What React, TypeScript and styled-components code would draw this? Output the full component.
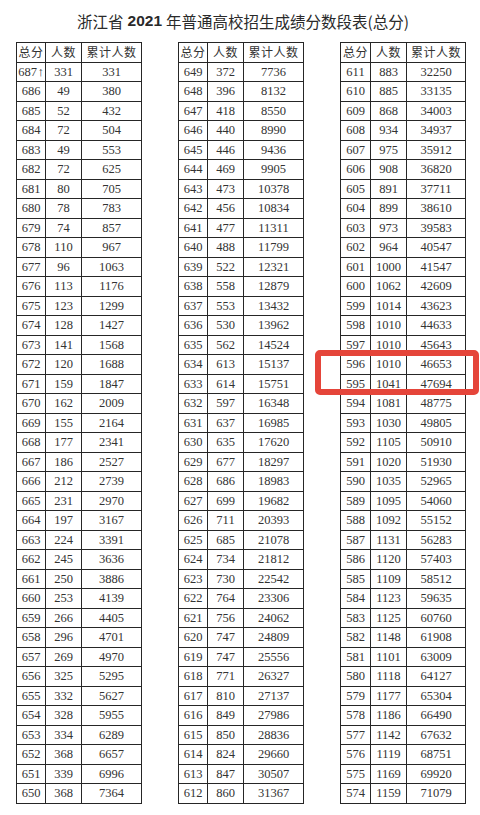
import React from "react";
import styled, { createGlobalStyle } from "styled-components";

const GlobalStyle = createGlobalStyle`
  html, body {
    margin: 0;
    padding: 0;
    background: #ffffff;
  }
  body {
    font-family: "Liberation Serif", "Noto Sans CJK SC", serif;
  }
`;

// 每一列：起始分 + 每分人数，累计人数在渲染时算出
const columns: { start: number; counts: number[] }[] = [
  {
    start: 687,
    counts: [
      331, 49, 52, 72, 49, 72, 80, 78, 74, 110, 96, 113, 123, 128, 141, 120,
      159, 162, 155, 177, 186, 212, 231, 197, 224, 245, 250, 253, 266, 296,
      269, 325, 332, 328, 334, 368, 339, 368,
    ],
  },
  {
    start: 649,
    counts: [
      372, 396, 418, 440, 446, 469, 473, 456, 477, 488, 522, 558, 553, 530,
      562, 613, 614, 597, 637, 635, 677, 686, 699, 711, 685, 734, 730, 764,
      756, 747, 747, 771, 810, 849, 850, 824, 847, 860,
    ],
  },
  {
    start: 611,
    counts: [
      883, 885, 868, 934, 975, 908, 891, 899, 973, 964, 1000, 1062, 1014,
      1010, 1010, 1010, 1041, 1081, 1030, 1105, 1020, 1035, 1095, 1092, 1131,
      1120, 1109, 1123, 1125, 1148, 1101, 1118, 1177, 1186, 1142, 1119, 1169,
      1159,
    ],
  },
];

const Page = styled.div`
  width: 480px;
  height: 815px;
  background: #fff;
  overflow: hidden;
`;

const Title = styled.h1`
  margin: 0;
  height: 42px;
  display: flex;
  align-items: center;
  justify-content: center;
  padding-left: 6px;
  font-family: "Noto Sans CJK SC", "Liberation Sans", sans-serif;
  font-weight: 400;
  font-size: 15.5px;
  color: #2a2a2a;

  b {
    font-family: "Liberation Sans", sans-serif;
    font-weight: 700;
    margin: 0 4px;
  }
`;

const Tables = styled.div`
  display: flex;
  padding-left: 16px;
  gap: 36px;
`;

const Holder = styled.div`
  position: relative;
`;

const Grid = styled.table`
  border-collapse: collapse;
  table-layout: fixed;
  width: 125px;
  border: 1.5px solid #222;
`;

const Col = styled.col<{ $w: number }>`
  width: ${(p) => p.$w}px;
`;

const Cell = styled.td<{ $head?: boolean }>`
  height: 18.5px;
  padding: 0;
  border: 1px solid #262626;
  text-align: center;
  vertical-align: middle;
  color: #333;
  white-space: nowrap;
  overflow: visible;
  font-family: ${(p) =>
    p.$head
      ? `"Noto Sans CJK SC", sans-serif`
      : `"Liberation Serif", "Noto Sans CJK SC", serif`};
  font-size: ${(p) => (p.$head ? "12px" : "12.5px")};
  letter-spacing: ${(p) => (p.$head ? "0.5px" : "0")};
  line-height: 1;
`;

const Arrow = styled.span`
  font-family: "Liberation Serif", "DejaVu Serif", serif;
  font-size: 13px;
  margin-left: 0.5px;
`;

const Mark = styled.div`
  position: absolute;
  left: -25px;
  top: 308px;
  width: 164px;
  height: 45px;
  box-sizing: border-box;
  border: 6px solid #e5453a;
  border-radius: 5px;
  pointer-events: none;
`;

function ScoreTable({
  start,
  counts,
  base,
  widths,
  marked,
}: {
  start: number;
  counts: number[];
  base: number;
  widths: number[];
  marked?: boolean;
}) {
  let total = base;
  return (
    <Holder>
      <Grid>
        <colgroup>
          {widths.map((w, i) => (
            <Col key={i} $w={w} />
          ))}
        </colgroup>
        <tbody>
          <tr>
            <Cell $head>总分</Cell>
            <Cell $head>人数</Cell>
            <Cell $head>累计人数</Cell>
          </tr>
          {counts.map((n, i) => {
            total += n;
            const score = start - i;
            return (
              <tr key={score}>
                <Cell>
                  {score}
                  {score === 687 && <Arrow>↑</Arrow>}
                </Cell>
                <Cell>{n}</Cell>
                <Cell>{total}</Cell>
              </tr>
            );
          })}
        </tbody>
      </Grid>
      {marked && <Mark />}
    </Holder>
  );
}

export default function App() {
  const bases: number[] = [];
  let acc = 0;
  columns.forEach((c) => {
    bases.push(acc);
    acc += c.counts.reduce((a, b) => a + b, 0);
  });

  return (
    <Page>
      <GlobalStyle />
      <Title>
        浙江省<b>2021</b>年普通高校招生成绩分数段表(总分)
      </Title>
      <Tables>
        <ScoreTable {...columns[0]} base={bases[0]} widths={[29, 36, 60]} />
        <ScoreTable {...columns[1]} base={bases[1]} widths={[29, 36, 60]} />
        <ScoreTable
          {...columns[2]}
          base={bases[2]}
          widths={[30, 36, 59]}
          marked
        />
      </Tables>
    </Page>
  );
}
